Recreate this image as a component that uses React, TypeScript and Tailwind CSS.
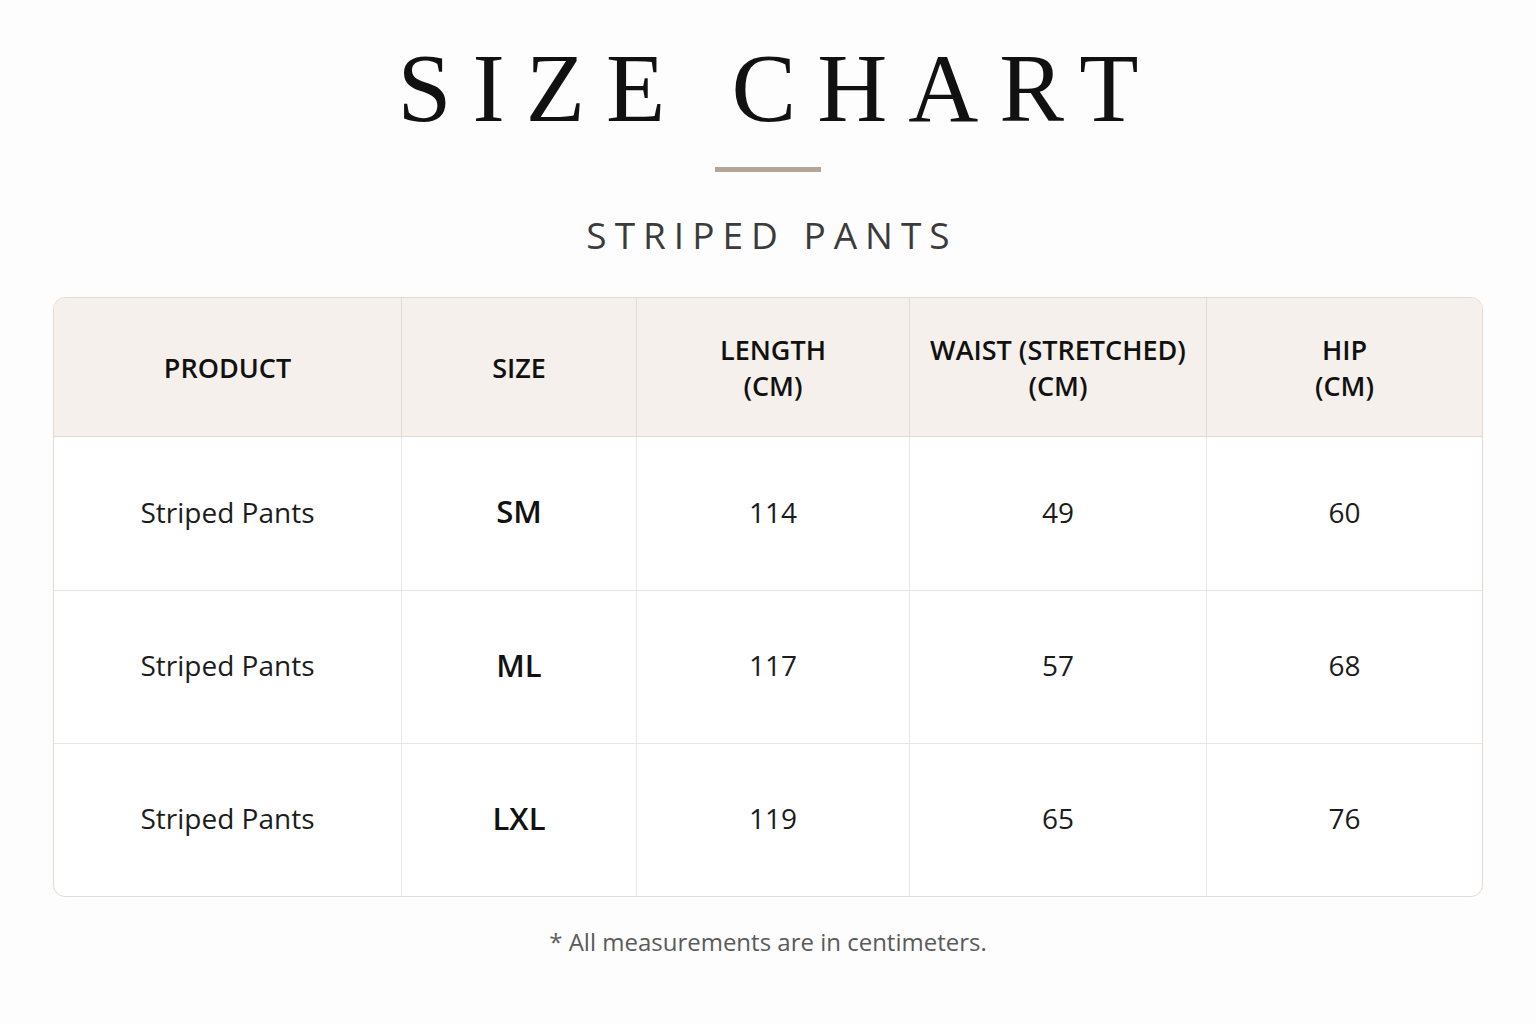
const headers = [
  ["PRODUCT"],
  ["SIZE"],
  ["LENGTH", "(CM)"],
  ["WAIST (STRETCHED)", "(CM)"],
  ["HIP", "(CM)"],
]

const rows = [
  { product: "Striped Pants", size: "SM", length: "114", waist: "49", hip: "60" },
  { product: "Striped Pants", size: "ML", length: "117", waist: "57", hip: "68" },
  { product: "Striped Pants", size: "LXL", length: "119", waist: "65", hip: "76" },
]

const cols = "grid grid-cols-[347px_235px_273px_297px_276px]"

export default function App() {
  return (
    <div className="min-h-screen w-full bg-[#fdfdfd] flex flex-col items-center pt-[40px] font-['Open_Sans',sans-serif] text-[#1a1a1a]">
      <h1 className="font-['Liberation_Serif',serif] text-[97px] leading-none tracking-[21px] pl-[21px] text-[#111]">
        SIZE CHART
      </h1>
      <div className="mt-[30px] h-[5px] w-[106px] bg-[#b4a599]" />
      <h2 className="mt-[44px] text-[37px] leading-none font-medium tracking-[8px] pl-[8px] text-[#3b3b3b]">
        STRIPED PANTS
      </h2>

      <div className="mt-[44px] w-[1430px] rounded-[12px] border border-[#e3dad4] overflow-hidden bg-white">
        <div className={`${cols} h-[139px] bg-[#f5f0eb] border-b border-[#e3d9d2]`}>
          {headers.map((h, i) => (
            <div
              key={i}
              className={`flex flex-col items-center justify-center pt-[2px] text-[27px] leading-[36px] font-semibold text-[#111] ${i > 0 ? "border-l border-[#e3dad4]" : ""}`}
            >
              {h.map((line) => (
                <span key={line}>{line}</span>
              ))}
            </div>
          ))}
        </div>
        {rows.map((r, ri) => (
          <div key={ri} className={`${cols} h-[153px] ${ri > 0 ? "border-t border-[#ece6e2]" : ""}`}>
            <div className="flex items-center justify-center pb-[4px] text-[28px] text-[#1c1c1c]">{r.product}</div>
            <div className="flex items-center justify-center pb-[4px] border-l border-[#ece6e2] text-[31px] font-semibold text-[#111]">{r.size}</div>
            <div className="flex items-center justify-center pb-[4px] border-l border-[#ece6e2] text-[28px] text-[#1c1c1c]">{r.length}</div>
            <div className="flex items-center justify-center pb-[4px] border-l border-[#ece6e2] text-[28px] text-[#1c1c1c]">{r.waist}</div>
            <div className="flex items-center justify-center pb-[4px] border-l border-[#ece6e2] text-[28px] text-[#1c1c1c]">{r.hip}</div>
          </div>
        ))}
      </div>

      <p className="mt-[33px] text-[24px] leading-none text-[#5a5a5a]">* All measurements are in centimeters.</p>
    </div>
  )
}
